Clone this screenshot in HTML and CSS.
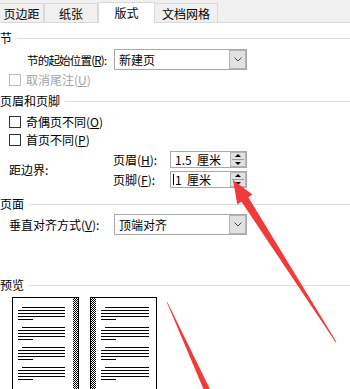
FILE: index.html
```html
<!DOCTYPE html>
<html lang="zh-CN">
<head>
<meta charset="utf-8">
<title>版式</title>
<link rel="stylesheet" href="styles.css">
</head>
<body>
<div class="dialog">
  <div class="tabs">
    <div class="tab t1">页边距</div>
    <div class="tab t2">纸张</div>
    <div class="tab t3 active">版式</div>
    <div class="tab t4">文档网格</div>
  </div>

  <div class="content">
    <div class="head h-sec"><span>节</span><i class="rule"></i></div>
    <div class="row r-start">
      <label class="lbl lbl-start">节的起始位置(<u>R</u>):</label>
      <div class="select"><span class="val">新建页</span><b class="drop"><svg width="8" height="5" viewBox="0 0 8 5"><path d="M0.5 0.5 L4 4 L7.5 0.5" fill="none" stroke="#444" stroke-width="1"/></svg></b></div>
    </div>
    <div class="check-row disabled r-endnote"><span class="cb"></span><span>取消尾注(<u>U</u>)</span></div>

    <div class="head h-hf"><span>页眉和页脚</span><i class="rule"></i></div>
    <div class="check-row r-odd"><span class="cb"></span><span>奇偶页不同(<u>O</u>)</span></div>
    <div class="check-row r-first"><span class="cb"></span><span>首页不同(<u>P</u>)</span></div>

    <div class="margins">
      <div class="m-label">距边界:</div>
      <div class="m-grid">
        <label class="m-lbl">页眉(<u>H</u>):</label>
        <div class="spin"><span class="val">1.5&nbsp; 厘米</span><b class="spin-btn"><i class="up"></i><i class="sep"></i><i class="down"></i></b></div>
        <label class="m-lbl">页脚(<u>F</u>):</label>
        <div class="spin focused"><span class="caret"></span><span class="val">1&nbsp; 厘米</span><b class="spin-btn"><i class="up"></i><i class="sep"></i><i class="down"></i></b></div>
      </div>
    </div>

    <div class="head h-page"><span>页面</span><i class="rule"></i></div>
    <div class="row r-valign">
      <label class="lbl lbl-v">垂直对齐方式(<u>V</u>):</label>
      <div class="select"><span class="val">顶端对齐</span><b class="drop"><svg width="8" height="5" viewBox="0 0 8 5"><path d="M0.5 0.5 L4 4 L7.5 0.5" fill="none" stroke="#444" stroke-width="1"/></svg></b></div>
    </div>

    <div class="head h-prev"><span>预览</span><i class="rule"></i></div>
    <div class="preview">
      <div class="pg pg-left">
        <div class="lines">
          <div class="para"><i class="ln ind"></i><i class="ln"></i><i class="ln"></i><i class="ln"></i><i class="ln short"></i></div>
          <div class="para"><i class="ln ind"></i><i class="ln"></i><i class="ln"></i><i class="ln"></i><i class="ln short"></i></div>
          <div class="para"><i class="ln ind"></i><i class="ln"></i><i class="ln"></i><i class="ln"></i><i class="ln short"></i></div>
          <div class="para"><i class="ln ind"></i><i class="ln"></i><i class="ln"></i><i class="ln"></i><i class="ln short"></i></div>
        </div>
        <div class="bind"></div>
      </div>
      <div class="pg pg-right">
        <div class="bind"></div>
        <div class="lines">
          <div class="para"><i class="ln ind"></i><i class="ln"></i><i class="ln"></i><i class="ln"></i><i class="ln short"></i></div>
          <div class="para"><i class="ln ind"></i><i class="ln"></i><i class="ln"></i><i class="ln"></i><i class="ln short"></i></div>
          <div class="para"><i class="ln ind"></i><i class="ln"></i><i class="ln"></i><i class="ln"></i><i class="ln short"></i></div>
          <div class="para"><i class="ln ind"></i><i class="ln"></i><i class="ln"></i><i class="ln"></i><i class="ln short"></i></div>
        </div>
      </div>
    </div>
  </div>

  <svg class="arrows" width="350" height="389" viewBox="0 0 350 389">
    <polygon fill="#f23a3a" points="233,180 252.5,194.6 248.3,197.3 336.4,341.7 335.6,342.3 241.5,201.7 237.3,204.4"/>
    <polygon fill="#f23a3a" points="167.2,301.8 166.8,302.2 205.3,393.4 210.7,390.6"/>
  </svg>
</div>
</body>
</html>
```

FILE: styles.css
```css
html, body {
  margin: 0;
  padding: 0;
  background: #fff;
}

.dialog {
  position: relative;
  width: 350px;
  height: 389px;
  overflow: hidden;
  font-family: "Noto Sans CJK SC", "Noto Sans", sans-serif;
  font-size: 12px;
  line-height: 14px;
  color: #000;
}

/* tabs */
.tabs {
  display: flex;
  align-items: flex-end;
  height: 23px;
  box-sizing: border-box;
  background: #f0f0f0;
  border-bottom: 1px solid #d9d9d9;
}

.tab {
  box-sizing: border-box;
  height: 19px;
  display: flex;
  align-items: center;
  justify-content: center;
  border: 1px solid #d9d9d9;
  border-bottom: none;
  border-left: none;
  background: #f0f0f0;
  padding-top: 1px;
  white-space: nowrap;
}

.t1 { width: 44px; }
.t2 { width: 54px; border-left: 1px solid #d9d9d9; }
.t3 { width: 57px; }
.t4 { width: 63px; }

.tab.active {
  height: 21px;
  background: #fff;
  margin-bottom: -1px;
  border-left: 1px solid #d9d9d9;
  padding-top: 0;
  padding-bottom: 1px;
}

/* content */
.content {
  display: flex;
  flex-direction: column;
}

.head {
  display: flex;
  align-items: center;
  height: 14px;
  white-space: nowrap;
}

.rule {
  flex: 1;
  height: 1px;
  background: #dcdcdc;
  margin-left: 5px;
}

.h-sec { margin-top: 8px; }
.h-hf { margin-top: 7px; }
.h-page { margin-top: 9px; }
.h-prev { margin-top: 43px; }

.row {
  display: flex;
  align-items: center;
  height: 21px;
}

.r-start { margin-top: 4px; }
.r-valign { margin-top: 3px; }

.lbl {
  box-sizing: border-box;
  flex: 0 0 114px;
  width: 114px;
  padding-left: 27px;
  white-space: nowrap;
}

.lbl-start { font-size: 11.5px; letter-spacing: -0.8px; }

.lbl-v { padding-left: 9px; }

.select {
  box-sizing: border-box;
  flex: 0 0 133px;
  width: 133px;
  height: 21px;
  border: 1px solid #a8a8a8;
  display: flex;
  align-items: stretch;
  background: #fff;
}

.select .val {
  flex: 1;
  padding-left: 4px;
  display: flex;
  align-items: center;
  white-space: nowrap;
}

.drop {
  box-sizing: border-box;
  width: 17px;
  background: #e1e1e1;
  border: 1px solid #b4b4b4;
  display: flex;
  align-items: center;
  justify-content: center;
}

/* check rows */
.check-row {
  display: flex;
  align-items: center;
  height: 14px;
  padding-left: 9px;
  white-space: nowrap;
}

.r-endnote { margin-top: 3px; }
.r-odd { margin-top: 7px; }
.r-first { margin-top: 4px; }

.cb {
  box-sizing: border-box;
  flex: 0 0 12px;
  width: 12px;
  height: 12px;
  border: 1px solid #333;
  background: #fff;
  margin-right: 5px;
}

.check-row.disabled { color: #a3a3a3; }
.check-row.disabled .cb { border-color: #bdbdbd; }

/* margins */
.margins {
  display: flex;
  align-items: center;
  margin-top: 4px;
}

.m-label {
  box-sizing: border-box;
  flex: 0 0 113px;
  padding-left: 9px;
  white-space: nowrap;
}

.m-grid {
  display: grid;
  grid-template-columns: 57px 77px;
  grid-auto-rows: 17px;
  row-gap: 3px;
  align-items: center;
}

.m-lbl { white-space: nowrap; }

.spin {
  position: relative;
  box-sizing: border-box;
  height: 17px;
  border: 1px solid #a8a8a8;
  display: flex;
  align-items: stretch;
}

.spin .val {
  flex: 1;
  padding-left: 4px;
  display: flex;
  align-items: center;
  white-space: nowrap;
}

.caret {
  position: absolute;
  left: 2px;
  top: 2px;
  width: 1px;
  height: 11px;
  background: #000;
}

.spin-btn {
  box-sizing: border-box;
  width: 16px;
  background: #e1e1e1;
  border: 1px solid #b4b4b4;
  display: flex;
  flex-direction: column;
  align-items: center;
  justify-content: center;
}

.spin-btn .up {
  width: 0;
  height: 0;
  border-left: 3px solid transparent;
  border-right: 3px solid transparent;
  border-bottom: 3px solid #000;
}

.spin-btn .down {
  width: 0;
  height: 0;
  border-left: 3px solid transparent;
  border-right: 3px solid transparent;
  border-top: 3px solid #000;
}

.spin-btn .sep {
  width: 12px;
  height: 1px;
  background: #9a9a9a;
  margin: 2px 0;
}

/* preview */
.preview {
  display: flex;
  gap: 11px;
  padding-left: 12px;
  margin-top: 5px;
}

.pg {
  box-sizing: border-box;
  width: 67px;
  height: 110px;
  border: 1px solid #000;
  display: flex;
  background: #fff;
}

.pg-left .lines { padding-left: 5px; width: 47px; }
.pg-right .lines { padding-left: 5px; width: 48px; }

.lines {
  padding-top: 9px;
  display: flex;
  flex-direction: column;
  gap: 7px;
}

.para {
  display: flex;
  flex-direction: column;
  align-items: flex-start;
  gap: 2px;
}

.ln {
  display: block;
  width: 100%;
  height: 1px;
  background: #000;
}

.ln.ind { margin-left: 4px; width: calc(100% - 4px); }
.ln.short { width: 15px; }

.bind {
  width: 5px;
  background: repeating-conic-gradient(#000 0 25%, #fff 0 50%) 0 0 / 2px 2px;
}

.pg-left .bind { margin-left: auto; }

/* annotation overlay */
.arrows {
  position: absolute;
  left: 0;
  top: 0;
  pointer-events: none;
}
```
